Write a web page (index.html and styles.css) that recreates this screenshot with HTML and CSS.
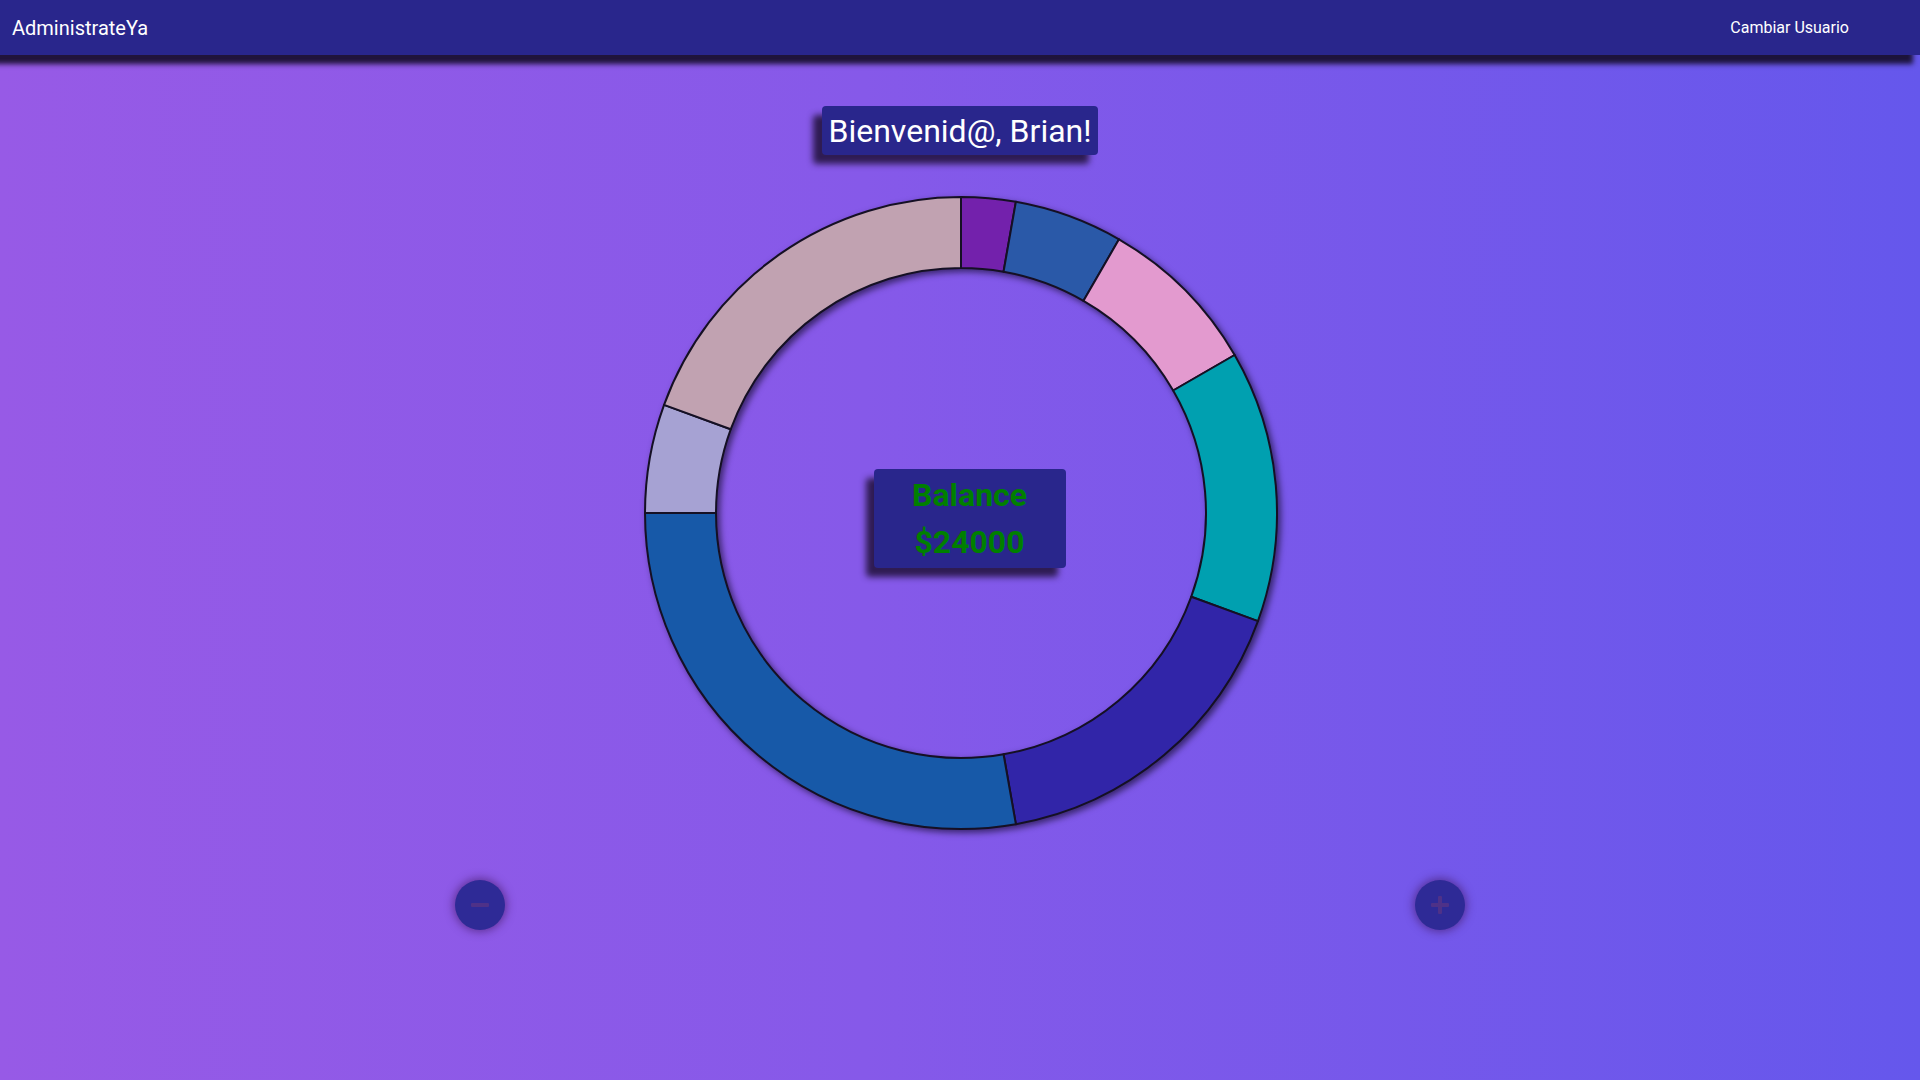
FILE: index.html
```html
<!DOCTYPE html>
<html lang="es">
<head>
<meta charset="utf-8">
<title>AdministrateYa</title>
<link rel="stylesheet" href="styles.css">
</head>
<body>
<header class="navbar">
  <span class="brand">AdministrateYa</span>
  <span class="nav-link">Cambiar Usuario</span>
</header>
<main class="main">
  <h1 class="welcome">Bienvenid@, Brian!</h1>
  <div class="chart">
    <svg class="donut" width="640" height="640" viewBox="0 0 640 640">
      <g stroke="#151024" stroke-width="2" stroke-linejoin="round">
        <path fill="#7321AC" d="M320,4 A316,316 0 0 1 374.87,8.80 L362.54,78.72 A245,245 0 0 0 320,75 Z"/>
        <path fill="#2A59A8" d="M374.87,8.80 A316,316 0 0 1 478,46.34 L442.5,107.82 A245,245 0 0 0 362.54,78.72 Z"/>
        <path fill="#E39ACF" d="M478,46.34 A316,316 0 0 1 593.66,162 L532.18,197.5 A245,245 0 0 0 442.5,107.82 Z"/>
        <path fill="#00A0B0" d="M593.66,162 A316,316 0 0 1 616.94,428.08 L550.22,403.79 A245,245 0 0 0 532.18,197.5 Z"/>
        <path fill="#3125A8" d="M616.94,428.08 A316,316 0 0 1 374.87,631.20 L362.54,561.28 A245,245 0 0 0 550.22,403.79 Z"/>
        <path fill="#1759A8" d="M374.87,631.20 A316,316 0 0 1 4,320 L75,320 A245,245 0 0 0 362.54,561.28 Z"/>
        <path fill="#A6A2D3" d="M4,320 A316,316 0 0 1 23.06,211.92 L89.78,236.21 A245,245 0 0 0 75,320 Z"/>
        <path fill="#C1A2B1" d="M23.06,211.92 A316,316 0 0 1 320,4 L320,75 A245,245 0 0 0 89.78,236.21 Z"/>
      </g>
    </svg>
    <div class="balance">
      <span>Balance</span>
      <span>$24000</span>
    </div>
  </div>
  <div class="actions">
    <button class="fab" aria-label="Quitar"><span class="icon-minus"></span></button>
    <button class="fab" aria-label="Agregar"><span class="icon-plus"></span></button>
  </div>
</main>
</body>
</html>
```

FILE: styles.css
```css
html, body {
  margin: 0;
  padding: 0;
}
body {
  min-height: 1080px;
  font-family: Roboto, "Liberation Sans", Arial, sans-serif;
  background: linear-gradient(to right, #975AE6 0%, #8659E9 45%, #6557EC 100%);
  overflow: hidden;
}
.navbar {
  height: 55px;
  background: #29268C;
  display: flex;
  align-items: center;
  justify-content: space-between;
  padding: 0 71px 0 12px;
  box-shadow: -7px 9px 5px rgba(20, 12, 40, 0.9);
  position: relative;
  z-index: 2;
}
.brand {
  color: #fff;
  font-size: 20px;
  padding-top: 1px;
}
.nav-link {
  color: #fff;
  font-size: 16px;
}
.main {
  display: flex;
  flex-direction: column;
  align-items: center;
}
.welcome {
  margin: 51px 0 0 0;
  height: 49px;
  box-sizing: border-box;
  padding: 0 7px;
  display: flex;
  align-items: center;
  background: #29268C;
  color: #fff;
  font-weight: 400;
  font-size: 32px;
  border-radius: 4px;
  box-shadow: -9px 9px 6px rgba(25, 12, 45, 0.8);
}
.chart {
  position: relative;
  margin-top: 38px;
  width: 640px;
  height: 640px;
  left: 0.5px;
}
.donut {
  display: block;
  filter: drop-shadow(3px 3px 3px rgba(10, 5, 30, 0.6));
}
.balance {
  position: absolute;
  left: 233px;
  top: 276px;
  width: 192px;
  height: 99px;
  box-sizing: border-box;
  background: #29268C;
  border-radius: 4px;
  box-shadow: -8px 9px 6px rgba(25, 12, 45, 0.8);
  display: flex;
  flex-direction: column;
  align-items: center;
  justify-content: center;
  color: #008000;
  font-weight: 700;
  font-size: 32px;
  line-height: 47px;
}
.actions {
  width: 100%;
  display: flex;
  justify-content: space-around;
  margin-top: 47px;
}
.fab {
  width: 50px;
  height: 50px;
  border-radius: 50%;
  border: none;
  padding: 0;
  background: #2E2A96;
  box-shadow: 0 0 8px 2px rgba(60, 20, 90, 0.55);
  display: flex;
  align-items: center;
  justify-content: center;
  position: relative;
}
.icon-minus,
.icon-plus {
  position: relative;
  display: block;
  width: 18px;
  height: 4px;
  background: #4E3188;
  border-radius: 1px;
}
.icon-plus::after {
  content: "";
  position: absolute;
  left: 7px;
  top: -7px;
  width: 4px;
  height: 18px;
  background: #4E3188;
  border-radius: 1px;
}
```
